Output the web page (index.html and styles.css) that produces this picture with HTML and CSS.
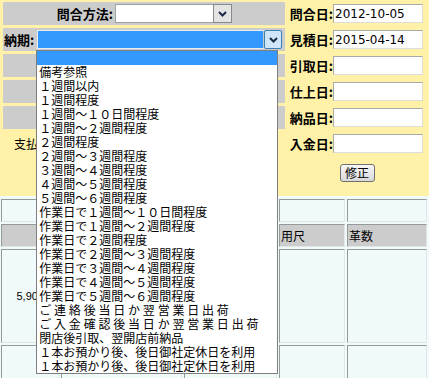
FILE: index.html
```html
<!DOCTYPE html>
<html lang="ja">
<head>
    <meta charset="UTF-8">
    <meta name="viewport" content="width=device-width, initial-scale=1.0">
    <title>受注編集</title>
    <link rel="stylesheet" href="styles.css">
</head>
<body>
    <form class="order-form">
        <div class="order-head">
            <div class="cell-gray row-method">
                <label class="lbl lbl-method" for="method">問合方法:</label>
                <div class="sel sel-plain">
                    <select id="method" class="sel-input"></select>
                    <span class="sel-btn">
                        <svg width="9" height="6" viewBox="0 0 9 6"><path d="M1 1 L4.5 4.5 L8 1" fill="none" stroke="#1c2a48" stroke-width="2"/></svg>
                    </span>
                </div>
            </div>
            <label class="lbl lbl-r">問合日:</label>
            <div class="in-cell"><input class="date-input" type="text" value="2012-10-05"></div>

            <div class="cell-gray row-delivery">
                <label class="lbl" for="delivery">納期:</label>
                <div class="sel sel-open">
                    <select id="delivery" class="sel-input"></select>
                    <span class="sel-btn">
                        <svg width="9" height="6" viewBox="0 0 9 6"><path d="M1 1 L4.5 4.5 L8 1" fill="none" stroke="#1c2a48" stroke-width="2"/></svg>
                    </span>
                    <ul class="opt-list">
                        <li class="is-active">&nbsp;</li>
                        <li>備考参照</li>
                        <li>１週間以内</li>
                        <li>１週間程度</li>
                        <li>１週間～１０日間程度</li>
                        <li>１週間～２週間程度</li>
                        <li>２週間程度</li>
                        <li>２週間～３週間程度</li>
                        <li>３週間～４週間程度</li>
                        <li>４週間～５週間程度</li>
                        <li>５週間～６週間程度</li>
                        <li>作業日で１週間～１０日間程度</li>
                        <li>作業日で１週間～２週間程度</li>
                        <li>作業日で２週間程度</li>
                        <li>作業日で２週間～３週間程度</li>
                        <li>作業日で３週間～４週間程度</li>
                        <li>作業日で４週間～５週間程度</li>
                        <li>作業日で５週間～６週間程度</li>
                        <li class="opt-wide">ご連絡後当日か翌営業日出荷</li>
                        <li class="opt-wide">ご入金確認後当日か翌営業日出荷</li>
                        <li>閉店後引取、翌開店前納品</li>
                        <li>１本お預かり後、後日御社定休日を利用</li>
                        <li>１本お預かり後、後日御社定休日を利用</li>
                    </ul>
                </div>
            </div>
            <label class="lbl lbl-r">見積日:</label>
            <div class="in-cell"><input class="date-input" type="text" value="2015-04-14"></div>

            <div class="cell-gray"></div>
            <label class="lbl lbl-r">引取日:</label>
            <div class="in-cell"><input class="date-input" type="text"></div>

            <div class="cell-gray"></div>
            <label class="lbl lbl-r">仕上日:</label>
            <div class="in-cell"><input class="date-input" type="text"></div>

            <div class="cell-gray"></div>
            <label class="lbl lbl-r">納品日:</label>
            <div class="in-cell"><input class="date-input" type="text"></div>

            <div class="cell-pay">支払方法:</div>
            <label class="lbl lbl-r">入金日:</label>
            <div class="in-cell"><input class="date-input" type="text"></div>

            <div></div>
            <div class="btn-cell"><button type="button" class="btn-fix">修正</button></div>
        </div>

        <div class="order-body">
            <div class="bc"></div>
            <div class="bc"></div>
            <div class="bc"></div>
            <div class="bc"></div>
            <div class="bc"></div>

            <div class="bc bc-head"></div>
            <div class="bc bc-head"></div>
            <div class="bc bc-head"></div>
            <div class="bc bc-head">用尺</div>
            <div class="bc bc-head">革数</div>

            <div class="bc bc-price">5,900円</div>
            <div class="bc"></div>
            <div class="bc"></div>
            <div class="bc"></div>
            <div class="bc"></div>

            <div class="bc"></div>
            <div class="bc"></div>
            <div class="bc"></div>
            <div class="bc"></div>
            <div class="bc"></div>
        </div>
    </form>
</body>
</html>
```

FILE: styles.css
```css
* {
    margin: 0;
    padding: 0;
    box-sizing: border-box;
}

html, body {
    overflow: hidden;
}

body {
    font-family: "Liberation Sans", "Noto Sans CJK JP", sans-serif;
    font-size: 12px;
    color: #000;
    background: #f0fafa;
}

/* upper block */
.order-head {
    display: grid;
    grid-template-columns: 282px 48px 1fr;
    grid-template-rows: repeat(6, 23px) auto;
    row-gap: 3px;
    padding: 2px 0 0 3px;
    background: #fff2a8;
}

.cell-gray {
    background: #cccccc;
    display: flex;
    align-items: center;
}

.lbl {
    font-family: "Noto Sans CJK JP", sans-serif;
    font-size: 13px;
    font-weight: bold;
    line-height: 1;
    white-space: nowrap;
}

.lbl-method {
    width: 110px;
    text-align: right;
}

.row-delivery {
    padding-left: 1px;
}

.lbl-r {
    display: flex;
    align-items: center;
    justify-content: flex-end;
}

.in-cell {
    display: flex;
    align-items: center;
}

.date-input {
    width: 90px;
    height: 19px;
    padding: 0 1px;
    border: 1px solid #a9a9a9;
    border-right-color: #dcdcdc;
    border-bottom-color: #dcdcdc;
    background: #fff;
    font-family: "DejaVu Sans", sans-serif;
    font-size: 12px;
    color: #000;
}

/* select boxes */
.sel {
    display: flex;
    height: 19px;
}

.sel-input {
    appearance: none;
    -webkit-appearance: none;
    flex: 1;
    height: 100%;
    border: 1px solid #a0a0a0;
    border-right: none;
    background: #fff;
    outline: none;
}

.sel-btn {
    display: flex;
    align-items: center;
    justify-content: center;
    height: 100%;
}

.sel-plain {
    width: 117px;
    margin-left: 2px;
}

.sel-plain .sel-btn {
    width: 19px;
    border: 1px solid #8a8a8a;
    background: #e4e4e4;
}

.sel-open {
    position: relative;
    width: 245px;
    margin-left: 3px;
}

.sel-open .sel-input {
    background: #3399ff;
    border-color: #e8eef5;
    border-right: 1px solid #c4c9cf;
}

.sel-open .sel-btn {
    width: 18px;
    border: 1px solid #3c7fb1;
    border-radius: 2px;
    background: #cfe6f8;
}

.opt-list {
    position: absolute;
    left: -1px;
    top: 20px;
    width: 242px;
    list-style: none;
    background: #fff;
    border: 1px solid #7f7f7f;
    font-family: "Noto Sans CJK JP", sans-serif;
    font-size: 12px;
    line-height: 14px;
    z-index: 10;
}

.opt-list li {
    height: 14px;
    padding-left: 2px;
    white-space: nowrap;
}

.opt-list .is-active {
    background: #3399ff;
}

.opt-list .opt-wide {
    letter-spacing: 2.8px;
}

.cell-pay {
    display: flex;
    align-items: center;
    padding-left: 11px;
    font-family: "Noto Sans CJK JP", sans-serif;
    white-space: nowrap;
}

.btn-cell {
    grid-column: 2 / 4;
    display: flex;
    justify-content: center;
    padding: 6px 0 14px;
}

.btn-fix {
    width: 35px;
    height: 18px;
    border: 1px solid #707070;
    border-radius: 3px;
    background: linear-gradient(#f7f7f7, #d9d9d9);
    font-family: "Noto Sans CJK JP", sans-serif;
    font-size: 12px;
    line-height: 1;
    color: #000;
}

/* lower table */
.order-body {
    display: grid;
    grid-template-columns: 58px 121px 93px 66px 80px;
    grid-template-rows: 23px 23px 94px 60px;
    gap: 2px;
    padding: 3px 0 0 1px;
}

.bc {
    border: 1px solid;
    border-color: #949a9a #e2e6e6 #e2e6e6 #949a9a;
    background: #f0fafa;
    font-family: "Noto Sans CJK JP", sans-serif;
    font-size: 12px;
    padding-left: 1px;
    display: flex;
    align-items: center;
}

.bc-head {
    background: #cccccc;
}

.bc-price {
    justify-content: flex-end;
    padding-right: 3px;
    font-family: "Liberation Sans", sans-serif;
    font-size: 11px;
}
```
